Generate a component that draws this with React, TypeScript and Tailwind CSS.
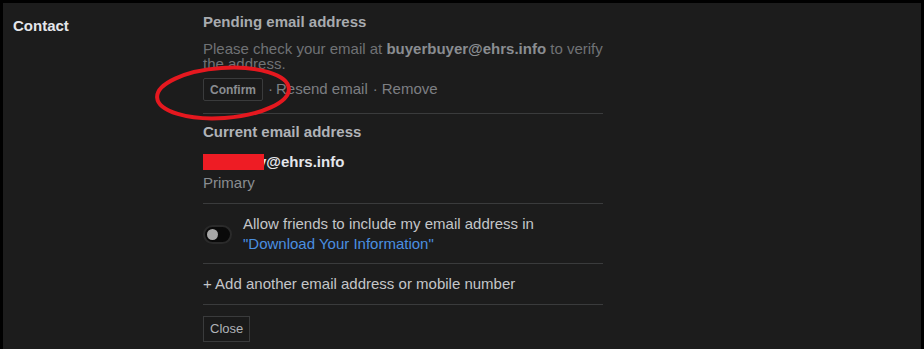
import React from "react";

const font = { fontFamily: '"Liberation Sans", Arial, sans-serif' };

function Divider() {
  return <div className="h-px w-full bg-[#3a3b3c]" />;
}

export default function App() {
  return (
    <div className="w-[924px] h-[349px] bg-black pt-[3px] px-[3px] overflow-hidden" style={font}>
      <div className="relative flex h-full bg-[#1c1c1c]">
        {/* left label column */}
        <div className="w-[200px] pl-[10px] pt-[11px]">
          <span className="text-[15px] font-bold leading-[18px] text-[#e4e6eb]">Contact</span>
        </div>

        {/* right column */}
        <div className="w-[400px] flex flex-col">
          {/* pending */}
          <div className="pt-[10px] pb-[12px]">
            <div className="text-[15px] font-bold leading-[18px] text-[#a8abaf]">Pending email address</div>
            <p className="mt-[10px] text-[15px] leading-[15px] text-[#707275]">
              Please check your email at <span className="font-bold text-[#8a8d91]">buyerbuyer@ehrs.info</span> to verify the address.
            </p>
            <div className="mt-[7px] flex items-center text-[15px] text-[#7d7f83]">
              <button className="h-[23px] px-[6px] border border-[#3a3b3c] rounded-[2px] bg-[#1a1a1a] text-[12px] font-bold text-[#8a8d91]">
                Confirm
              </button>
              <span className="ml-[5px]">·</span>
              <span className="ml-[3px]">Resend email</span>
              <span className="ml-[5px]">·</span>
              <span className="ml-[4px]">Remove</span>
            </div>
          </div>
          <Divider />

          {/* current */}
          <div className="pt-[9px] pb-[11px]">
            <div className="text-[15px] font-bold leading-[18px] text-[#b0b3b8]">Current email address</div>
            <div className="mt-[12px] flex items-center text-[15px] font-bold leading-[18px] text-[#e4e6eb]">
              <span className="relative z-10 inline-block w-[61px] h-[16px] bg-[#ee1c24]" />
              <span className="-ml-[6px]">y@ehrs.info</span>
            </div>
            <div className="mt-[3px] text-[15px] leading-[18px] text-[#8a8d91]">Primary</div>
          </div>
          <Divider />

          {/* toggle */}
          <div className="flex items-center gap-[11px] pt-[10px] pb-[9px]">
            <div className="flex items-center w-[29px] h-[19px] rounded-full bg-[#0a0a0a] border-2 border-[#2a2a2a] pl-[2px]">
              <div className="w-[11px] h-[11px] rounded-full bg-[#a8a8a8]" />
            </div>
            <div className="text-[15px] leading-[20px] text-[#c4c6c9]">
              <div>Allow friends to include my email address in</div>
              <div className="text-[#4a8fe0]">"Download Your Information"</div>
            </div>
          </div>
          <Divider />

          <div className="pt-[11px] pb-[11px] text-[15px] leading-[18px] text-[#c4c6c9]">+ Add another email address or mobile number</div>
          <Divider />

          <div className="pt-[11px]">
            <button className="h-[26px] px-[6px] border border-[#3a3b3c] bg-[#1a1a1a] text-[13px] text-[#b0b3b8]">Close</button>
          </div>
        </div>

        {/* annotation ellipse */}
        <svg className="absolute left-0 top-0 pointer-events-none" width="921" height="346">
          <ellipse cx="220" cy="90" rx="66" ry="25" fill="none" stroke="#e5181f" strokeWidth="4" transform="rotate(-4 220 90)" />
        </svg>
      </div>
    </div>
  );
}
